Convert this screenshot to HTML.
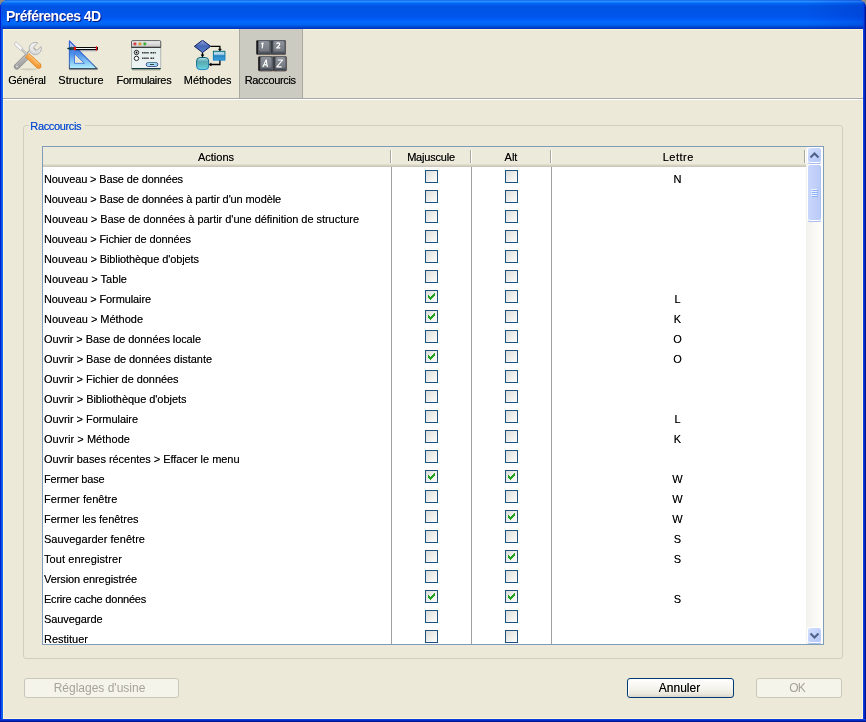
<!DOCTYPE html>
<html><head><meta charset="utf-8"><title>Préférences 4D</title>
<style>
html,body{margin:0;padding:0}
body{width:866px;height:722px;overflow:hidden;position:relative;background:#8e8b82;font-family:"Liberation Sans",sans-serif;font-size:11px;color:#000}
div,i,span{position:absolute;box-sizing:border-box;white-space:pre}
#win{will-change:transform;left:0;top:0;width:866px;height:722px;border-radius:8px 8px 0 0;overflow:hidden;background:#0831d9}
#tb{left:0;top:0;width:866px;height:29px;background:linear-gradient(to bottom,#0058ee 0%,#3593ff 4%,#288eff 6%,#127dff 8%,#036ffc 10%,#0262ee 14%,#0057e5 20%,#0054e3 24%,#0055eb 56%,#005bf5 66%,#026afe 76%,#0062ef 86%,#0050dc 91%,#0040cc 95%,#0030b8 100%)}
#tbl{left:0;top:0;width:3px;height:29px;background:linear-gradient(to right,#001dd0 0,#001dd0 1px,rgba(10,84,232,.7) 1px,rgba(10,84,232,0) 3px)}
#tbr{left:862px;top:0;width:4px;height:29px;background:linear-gradient(to left,#00148c 0,#00148c 1px,#0428c4 1px,#0428c4 2px,rgba(10,60,224,.8) 2px,rgba(10,60,224,0) 4px)}
#title{left:6px;top:8px;font-size:14px;font-weight:bold;color:#fff;text-shadow:1px 1px #0a1883;line-height:16px;letter-spacing:-0.52px}
#bl{left:0;top:29px;width:3px;height:693px;background:linear-gradient(to right,#001dd0 0,#001dd0 1px,#0a54e8 1px,#0a54e8 2px,#1264ee 2px)}
#br{left:863px;top:29px;width:3px;height:693px;background:linear-gradient(to right,#0a3ce0 0,#0a3ce0 1px,#0428c4 1px,#0428c4 2px,#00148c 2px)}
#bb{left:0;top:719px;width:866px;height:3px;background:linear-gradient(to bottom,#0a3ce0 0,#0a3ce0 1px,#0428c4 1px,#0428c4 2px,#00148c 2px)}
#body{left:3px;top:29px;width:860px;height:690px;background:#ece9d8;border:1px solid #fcf5d6}
/* toolbar */
#tsel{left:239px;top:29px;width:64px;height:69px;background:#cccbc2;border-left:1px solid #a9a9a3;border-right:1px solid #a9a9a3}
#tline{left:3px;top:98px;width:860px;height:2px;background:linear-gradient(to bottom,#a7a7a7 0,#a7a7a7 1px,#fff 1px)}
.tl{top:72px;height:16px;line-height:16px;text-align:center;transform:translateX(-50%)}
.ic{width:32px;height:32px;top:40px}
/* group */
#grp{left:23px;top:125px;width:820px;height:534px;border:1px solid #d0d0bf;border-radius:3px}
#gl{left:29px;top:119px;height:14px;line-height:14px;padding:0 3.8px 0 1.3px;background:#ece9d8;color:#0046d5;letter-spacing:-0.36px;text-shadow:0 0 0 rgba(0,70,213,.5)}
/* list */
#lb{left:42px;top:146px;width:782px;height:499px;border:1px solid #7f9db9;background:#fff;overflow:hidden}
#hd{left:43px;top:147px;width:763px;height:20px;background:linear-gradient(to bottom,#ebeadb 0,#ebeadb 17px,#e2decd 17px,#e2decd 18px,#d6d2c2 18px,#d6d2c2 19px,#cbc7b8 19px)}
.hs{top:150px;width:2px;height:13px;background:linear-gradient(to right,#aca899 0,#aca899 1px,#fff 1px)}
.ht{top:149px;height:16px;line-height:16px;transform:translateX(-50%)}
.vl{top:167px;width:1px;height:477px;background:#a0a0a0}
.rt,.tl,.ht,.lt,#cancel{text-shadow:0 0 0 rgba(0,0,0,.55)}
.rt{left:44px;height:20px;line-height:20px;margin-top:2px}
.lt{left:551px;width:253px;height:20px;line-height:20px;text-align:center;margin-top:2px}
.cb{width:13px;height:13px;border:1px solid #1c5180;background:linear-gradient(135deg,#dcdcd7 0%,#fff 100%)}
.cb.ck:after{content:"";position:absolute;left:2px;top:2px;width:7px;height:7px;background:
 linear-gradient(#21a121,#21a121) 0 2px/1px 3px no-repeat,
 linear-gradient(#21a121,#21a121) 1px 3px/1px 3px no-repeat,
 linear-gradient(#21a121,#21a121) 2px 4px/1px 3px no-repeat,
 linear-gradient(#21a121,#21a121) 3px 3px/1px 3px no-repeat,
 linear-gradient(#21a121,#21a121) 4px 2px/1px 3px no-repeat,
 linear-gradient(#21a121,#21a121) 5px 1px/1px 3px no-repeat,
 linear-gradient(#21a121,#21a121) 6px 0px/1px 3px no-repeat}
/* scrollbar */
#sb{left:806px;top:147px;width:17px;height:497px;background:linear-gradient(to right,#f3f1ec 0,#f8f7f3 40%,#fefefb 100%)}
.sbtn{left:807px;width:15px;height:17px;border:1px solid #fff;border-bottom-color:#a9bdee;border-radius:3px;background:linear-gradient(135deg,#d6e1fd 0,#c3d3fd 45%,#b3c6f6 100%);box-shadow:inset 0 -1px 0 0 #fff}
#thumb{left:807px;top:164px;width:15px;height:58px;border:1px solid #fff;border-radius:3px;border-bottom-color:#a9bdee;background:linear-gradient(to right,#c9d7fc 0,#c1d0fb 50%,#b7caf5 100%);box-shadow:inset 0 -1px 0 0 #fff,inset -1px 0 0 0 #adc1f2}
/* buttons */
.btn{height:20px;border-radius:3px;text-align:center;font-size:12px;line-height:19px}
.dis{border:1px solid #c9c7ba;background:#f5f4ea;color:#a6a498}
#cancel{left:627px;top:678px;width:107px;padding-right:2px;border:1px solid #003c74;background:linear-gradient(to bottom,#fff 0,#f4f3ec 55%,#ebe9de 82%,#d8d3c7 100%);box-shadow:inset 1px 1px 0 0 #fff;color:#000}
</style></head>
<body>
<div id="win">
<div id="tb"></div><div style="left:806px;top:0;width:60px;height:29px;background:linear-gradient(to right,rgba(0,20,170,0),rgba(0,20,170,.22))"></div><div id="tbl"></div><div id="tbr"></div>
<div id="title">Préférences 4D</div>
<div id="bl"></div><div id="br"></div><div id="bb"></div>
<div id="body"></div>
<div id="tsel"></div>
<div id="tline"></div>
<svg class="ic" style="position:absolute;left:12px" viewBox="0 0 32 32">
<defs>
<linearGradient id="wh" x1="0" y1="0" x2="1" y2="1"><stop offset="0" stop-color="#fbfbfb"/><stop offset="1" stop-color="#d4d4d4"/></linearGradient>
<linearGradient id="wr" x1="1" y1="0" x2="0" y2="1"><stop offset="0" stop-color="#e2e2e2"/><stop offset="0.35" stop-color="#b4b4b4"/><stop offset="1" stop-color="#a2a2a2"/></linearGradient>
<linearGradient id="og" x1="1" y1="0" x2="0" y2="1"><stop offset="0" stop-color="#ffc070"/><stop offset="0.5" stop-color="#f8a64a"/><stop offset="1" stop-color="#e88c28"/></linearGradient>
</defs>
<ellipse cx="16.5" cy="29.3" rx="8.5" ry="1.1" fill="#d2cfbc"/>
<path d="M21 10.5 L4.8 26.6" stroke="#8e8e8e" stroke-width="5.8" stroke-linecap="round" fill="none"/>
<path d="M21 10.5 L4.8 26.6" stroke="url(#wr)" stroke-width="4.4" stroke-linecap="round" fill="none"/>
<path d="M20.6 8.6 L4 25.2" stroke="#d4d4d4" stroke-width="0.8" stroke-linecap="round" fill="none" opacity="0.7"/>
<circle cx="5" cy="26.6" r="1.1" fill="#f4f4f4" stroke="#909090" stroke-width="0.5"/>
<path d="M22.5 10.5 L17.6 15.4" stroke="#ececec" stroke-width="4.4" fill="none"/>
<path transform="rotate(48 23.3 8.5)" d="M25.8 2.95 A6.1 6.1 0 1 1 20.8 2.95 L20.8 7.2 A2.5 2.5 0 0 0 25.8 7.2 Z" fill="url(#wh)" stroke="#b0b0b0" stroke-width="0.9"/>
<path d="M2.6 3.2 L4.4 2.2 L10.9 8 L8.6 10.3 L2.4 4.8 Z" fill="#f6f6f6" stroke="#b4b4b4" stroke-width="0.7"/>
<path d="M9.8 9.2 L15.2 14.8" stroke="#a4a4a4" stroke-width="2.2" fill="none"/>
<path d="M9.6 8.8 L15 14.4" stroke="#f0f0f0" stroke-width="0.9" fill="none"/>
<path d="M15 15 L26.6 25.9" stroke="#de8a2a" stroke-width="5.6" fill="none"/>
<circle cx="26.6" cy="25.9" r="2.8" fill="#de8a2a"/>
<path d="M15.3 15.3 L26.6 25.9" stroke="url(#og)" stroke-width="4.4" fill="none"/>
<circle cx="26.6" cy="25.9" r="2.2" fill="#f29a38"/>
<path d="M16.4 14.6 L27.4 24.9" stroke="#ffcf90" stroke-width="1" stroke-linecap="round" fill="none" opacity="0.8"/>
</svg>

<svg class="ic" style="position:absolute;left:66px" viewBox="0 0 32 32">
<defs>
<linearGradient id="tg" x1="0" y1="0" x2="0" y2="1"><stop offset="0" stop-color="#3a6ce0"/><stop offset="0.45" stop-color="#4a8ce8"/><stop offset="1" stop-color="#b4f2ff"/></linearGradient>
<linearGradient id="ts" x1="0" y1="0" x2="0" y2="1"><stop offset="0" stop-color="#2a58d8"/><stop offset="0.8" stop-color="#3a70c8"/><stop offset="1" stop-color="#485868"/></linearGradient>
</defs>
<path d="M3.6 29.7 H31.6" stroke="#c4c1ae" stroke-width="1"/>
<path d="M3.4 0.8 L31 28.6 H3.4 Z M8.5 13.8 V23.3 H18.4 Z" fill="url(#tg)" fill-rule="evenodd"/>
<path d="M3.9 1.8 L10.4 8.4 H3.9 Z" fill="#b8ccf4" opacity="0.9"/>
<path d="M3.4 0.8 L31 28.6 H3.4 Z" fill="none" stroke="url(#ts)" stroke-width="1.1" stroke-linejoin="round"/>
<path d="M8.5 13.8 V23.3 H18.4 Z" fill="none" stroke="#3a74dc" stroke-width="0.9"/>
<path d="M3 28.8 H31.8" stroke="#3c4c64" stroke-width="0.9"/>
<path d="M9 10.8 H31" stroke="#203c90" stroke-width="1" opacity="0.35"/>
<path d="M1 8.5 L5.6 6.9 V10.1 Z" fill="#003838" stroke="#003838" stroke-width="0.4"/>
<path d="M5.6 6.9 H8 V10.1 H5.6 Z" fill="#3c4444"/>
<rect x="9.8" y="7" width="20.4" height="3.1" fill="#080808"/>
<rect x="9.8" y="8" width="20.4" height="1" fill="#f4f4f4"/>
<rect x="8" y="6.8" width="2" height="3.5" fill="#ec0c0c"/>
<rect x="29.8" y="6.3" width="1.3" height="4.4" fill="#ec0c0c"/>
<rect x="31.1" y="7" width="0.9" height="3.1" fill="#080808"/>
</svg>

<svg class="ic" style="position:absolute;left:130px" viewBox="0 0 32 32">
<defs>
<linearGradient id="ft" x1="0" y1="0" x2="0" y2="1"><stop offset="0" stop-color="#f0f0f0"/><stop offset="1" stop-color="#c4c4c4"/></linearGradient>
<linearGradient id="fb" x1="0" y1="0" x2="0" y2="1"><stop offset="0" stop-color="#dfe8e8"/><stop offset="1" stop-color="#eef4f4"/></linearGradient>
<linearGradient id="bt" x1="0" y1="0" x2="0" y2="1"><stop offset="0" stop-color="#e0f4f8"/><stop offset="0.5" stop-color="#8cd4ec"/><stop offset="1" stop-color="#c0ecf8"/></linearGradient>
</defs>
<rect x="2" y="28.6" width="28.4" height="2.2" rx="1" fill="#c8c5b2"/>
<rect x="1.5" y="0.6" width="29.2" height="28.2" rx="1.2" fill="url(#fb)" stroke="#9aa4a4" stroke-width="0.7"/>
<path d="M1.5 28.6 H30.7" stroke="#0c3c3c" stroke-width="1.4"/>
<path d="M1.5 7.4 V1.8 Q1.5 0.6 2.7 0.6 H29.5 Q30.7 0.6 30.7 1.8 V7.4 Z" fill="url(#ft)" stroke="#484848" stroke-width="0.8"/>
<path d="M1.5 7.3 H30.7" stroke="#303030" stroke-width="1"/>
<circle cx="4.9" cy="3.8" r="1.6" fill="#e0383e" stroke="#c8a0a0" stroke-width="0.4"/><circle cx="9.9" cy="3.8" r="1.6" fill="#e09c24" stroke="#c8b898" stroke-width="0.4"/><circle cx="14.8" cy="3.8" r="1.6" fill="#34b02c" stroke="#a0c0a0" stroke-width="0.4"/>
<circle cx="6.5" cy="12.5" r="2.2" fill="#fff" stroke="#282828" stroke-width="1"/><circle cx="6.5" cy="12.5" r="0.9" fill="#000"/>
<circle cx="6.5" cy="18.4" r="2.2" fill="#fff" stroke="#282828" stroke-width="1"/>
<path d="M12 12.8 H19 M20.4 12.8 H25.8" stroke="#383838" stroke-width="1.5" stroke-dasharray="1.6 0.5"/>
<path d="M12 18.3 H19 M20.4 18.3 H24.6" stroke="#383838" stroke-width="1.5" stroke-dasharray="1.6 0.5"/>
<rect x="16.2" y="22.5" width="11.6" height="4" rx="2" fill="url(#bt)" stroke="#383088" stroke-width="0.8"/>
<path d="M17.6 22.6 H26.4" stroke="#4a9a9a" stroke-width="0.7"/>
<path d="M20 24.5 H24" stroke="#384848" stroke-width="1.1"/>
</svg>

<svg class="ic" style="position:absolute;left:194px" viewBox="0 0 32 32">
<defs>
<linearGradient id="dg" x1="0" y1="0" x2="0" y2="1"><stop offset="0" stop-color="#90a8e0"/><stop offset="0.5" stop-color="#4464b4"/><stop offset="1" stop-color="#5888d8"/></linearGradient>
<linearGradient id="rg" x1="0" y1="0" x2="0" y2="1"><stop offset="0" stop-color="#98c8e0"/><stop offset="0.3" stop-color="#c0e0f0"/><stop offset="0.5" stop-color="#2484c4"/><stop offset="1" stop-color="#48a4d4"/></linearGradient>
<linearGradient id="qg" x1="0" y1="0" x2="0" y2="1"><stop offset="0" stop-color="#b8e4ec"/><stop offset="0.35" stop-color="#58a8b0"/><stop offset="1" stop-color="#68d4dc"/></linearGradient>
<linearGradient id="qs" x1="0" y1="0" x2="0" y2="1"><stop offset="0" stop-color="#0c5c68"/><stop offset="1" stop-color="#2484c8"/></linearGradient>
<linearGradient id="rs" x1="0" y1="0" x2="0" y2="1"><stop offset="0" stop-color="#0c6c78"/><stop offset="1" stop-color="#1084d8"/></linearGradient>
</defs>
<path d="M16.8 6.3 H25.9 V11 M25.9 20 V24.5 H15.4 M8.5 12.6 V17" stroke="#000" stroke-width="1.3" fill="none"/>
<path d="M24.4 9 H27.4 L25.9 10.6 Z M7 14.8 H10 L8.5 16.6 Z M17.2 23 V26 L15.2 24.5 Z" fill="#000" stroke="#000" stroke-width="0.5"/>
<path d="M0.4 6.3 L8.5 0.2 L16.7 6.3 L8.5 12.5 Z" fill="url(#dg)" stroke="#101c5c" stroke-width="1"/>
<rect x="19.4" y="11.3" width="11.5" height="8.8" fill="url(#rg)" stroke="url(#rs)" stroke-width="1"/>
<rect x="2.6" y="17.5" width="12.1" height="12.1" rx="3.5" fill="url(#qg)" stroke="url(#qs)" stroke-width="1"/>
</svg>

<svg class="ic" style="position:absolute;left:256px" viewBox="0 0 32 32">
<defs><linearGradient id="kf" x1="0" y1="0" x2="0" y2="1"><stop offset="0" stop-color="#8e929a"/><stop offset="1" stop-color="#747880"/></linearGradient></defs>
<rect x="0.3" y="0.1" width="29.7" height="14.7" rx="1.6" fill="#33363c" stroke="#d8b490" stroke-width="0.6"/><rect x="2.2" y="16.2" width="28.7" height="15" rx="1.6" fill="#33363c" stroke="#d8b490" stroke-width="0.6"/>
<rect x="0.30" y="0.10" width="14.60" height="14.70" rx="1.6" fill="#585c64"/><rect x="0.50" y="0.60" width="1.5" height="13.70" rx="0.7" fill="#1a1a1c"/><rect x="2.90" y="0.90" width="10.40" height="10.70" rx="1.8" fill="url(#kf)"/><path d="M2.30 13.70 Q7.60 12.20 14.10 13.70" stroke="#42464e" stroke-width="1.1" fill="none"/><rect x="14.90" y="0.10" width="15.10" height="14.70" rx="1.6" fill="#585c64"/><rect x="15.10" y="0.60" width="1.5" height="13.70" rx="0.7" fill="#34373d"/><rect x="17.50" y="0.90" width="10.90" height="10.70" rx="1.8" fill="url(#kf)"/><path d="M16.90 13.70 Q22.45 12.20 29.20 13.70" stroke="#42464e" stroke-width="1.1" fill="none"/><rect x="2.20" y="16.20" width="14.90" height="15.00" rx="1.6" fill="#585c64"/><rect x="2.40" y="16.70" width="1.5" height="14.00" rx="0.7" fill="#1a1a1c"/><rect x="4.80" y="17.00" width="10.70" height="11.00" rx="1.8" fill="url(#kf)"/><path d="M4.20 30.10 Q9.65 28.60 16.30 30.10" stroke="#42464e" stroke-width="1.1" fill="none"/><rect x="17.10" y="16.20" width="13.80" height="15.00" rx="1.6" fill="#585c64"/><rect x="17.30" y="16.70" width="1.5" height="14.00" rx="0.7" fill="#34373d"/><rect x="19.70" y="17.00" width="9.60" height="11.00" rx="1.8" fill="url(#kf)"/><path d="M19.10 30.10 Q24.00 28.60 30.10 30.10" stroke="#42464e" stroke-width="1.1" fill="none"/>
<g fill="none" stroke="#fff" stroke-width="1.15" stroke-linejoin="round" stroke-linecap="butt">
<path d="M5.3 3.9 L7 2.9 L6.1 8.3"/>
<path d="M20.6 4 Q21.3 2.7 22.7 2.9 Q24.2 3.3 23.5 4.9 Q22.8 6 20.6 7.9 H24.2"/>
<path d="M6.8 27 L10.2 19.8 L11.4 27 M7.9 24.9 H11"/>
<path d="M21.8 20 H26.6 L20.8 26.8 H25.6"/>
</g>
</svg>

<div class="tl" style="left:27px;letter-spacing:-0.2px">Général</div>
<div class="tl" style="left:81px;letter-spacing:0.1px">Structure</div>
<div class="tl" style="left:144px;letter-spacing:-0.3px">Formulaires</div>
<div class="tl" style="left:207.6px;letter-spacing:-0.1px">Méthodes</div>
<div class="tl" style="left:270.2px;letter-spacing:-0.35px">Raccourcis</div>

<div id="grp"></div>
<div id="gl">Raccourcis</div>
<div id="lb"></div>
<div id="hd"></div>
<div class="hs" style="left:390px"></div>
<div class="hs" style="left:470px"></div>
<div class="hs" style="left:550px"></div>
<div class="hs" style="left:804px"></div>
<div class="ht" style="left:216px">Actions</div>
<div class="ht" style="left:431px;letter-spacing:-0.2px">Majuscule</div>
<div class="ht" style="left:511px">Alt</div>
<div class="ht" style="left:678.3px;letter-spacing:0.5px">Lettre</div>
<div class="vl" style="left:391px"></div>
<div class="vl" style="left:471px"></div>
<div class="vl" style="left:551px"></div>
<div class="rt" style="top:167px;letter-spacing:-0.128px">Nouveau > Base de données</div>
<i class="cb" style="left:425px;top:170px"></i>
<i class="cb" style="left:505px;top:170px"></i>
<div class="lt" style="top:167px">N</div>
<div class="rt" style="top:187px;letter-spacing:-0.112px">Nouveau > Base de données à partir d'un modèle</div>
<i class="cb" style="left:425px;top:190px"></i>
<i class="cb" style="left:505px;top:190px"></i>
<div class="rt" style="top:207px;letter-spacing:-0.037px">Nouveau > Base de données à partir d'une définition de structure</div>
<i class="cb" style="left:425px;top:210px"></i>
<i class="cb" style="left:505px;top:210px"></i>
<div class="rt" style="top:227px;letter-spacing:-0.112px">Nouveau > Fichier de données</div>
<i class="cb" style="left:425px;top:230px"></i>
<i class="cb" style="left:505px;top:230px"></i>
<div class="rt" style="top:247px;letter-spacing:-0.089px">Nouveau > Bibliothèque d'objets</div>
<i class="cb" style="left:425px;top:250px"></i>
<i class="cb" style="left:505px;top:250px"></i>
<div class="rt" style="top:267px;letter-spacing:0.022px">Nouveau > Table</div>
<i class="cb" style="left:425px;top:270px"></i>
<i class="cb" style="left:505px;top:270px"></i>
<div class="rt" style="top:287px;letter-spacing:-0.107px">Nouveau > Formulaire</div>
<i class="cb ck" style="left:425px;top:290px"></i>
<i class="cb" style="left:505px;top:290px"></i>
<div class="lt" style="top:287px">L</div>
<div class="rt" style="top:307px;letter-spacing:-0.023px">Nouveau > Méthode</div>
<i class="cb ck" style="left:425px;top:310px"></i>
<i class="cb" style="left:505px;top:310px"></i>
<div class="lt" style="top:307px">K</div>
<div class="rt" style="top:327px;letter-spacing:-0.094px">Ouvrir > Base de données locale</div>
<i class="cb" style="left:425px;top:330px"></i>
<i class="cb" style="left:505px;top:330px"></i>
<div class="lt" style="top:327px">O</div>
<div class="rt" style="top:347px;letter-spacing:-0.052px">Ouvrir > Base de données distante</div>
<i class="cb ck" style="left:425px;top:350px"></i>
<i class="cb" style="left:505px;top:350px"></i>
<div class="lt" style="top:347px">O</div>
<div class="rt" style="top:367px;letter-spacing:-0.057px">Ouvrir > Fichier de données</div>
<i class="cb" style="left:425px;top:370px"></i>
<i class="cb" style="left:505px;top:370px"></i>
<div class="rt" style="top:387px;letter-spacing:-0.039px">Ouvrir > Bibliothèque d'objets</div>
<i class="cb" style="left:425px;top:390px"></i>
<i class="cb" style="left:505px;top:390px"></i>
<div class="rt" style="top:407px;letter-spacing:-0.055px">Ouvrir > Formulaire</div>
<i class="cb" style="left:425px;top:410px"></i>
<i class="cb" style="left:505px;top:410px"></i>
<div class="lt" style="top:407px">L</div>
<div class="rt" style="top:427px;letter-spacing:0.044px">Ouvrir > Méthode</div>
<i class="cb" style="left:425px;top:430px"></i>
<i class="cb" style="left:505px;top:430px"></i>
<div class="lt" style="top:427px">K</div>
<div class="rt" style="top:447px;letter-spacing:-0.038px">Ouvrir bases récentes > Effacer le menu</div>
<i class="cb" style="left:425px;top:450px"></i>
<i class="cb" style="left:505px;top:450px"></i>
<div class="rt" style="top:467px;letter-spacing:-0.169px">Fermer base</div>
<i class="cb ck" style="left:425px;top:470px"></i>
<i class="cb ck" style="left:505px;top:470px"></i>
<div class="lt" style="top:467px">W</div>
<div class="rt" style="top:487px;letter-spacing:0.054px">Fermer fenêtre</div>
<i class="cb" style="left:425px;top:490px"></i>
<i class="cb" style="left:505px;top:490px"></i>
<div class="lt" style="top:487px">W</div>
<div class="rt" style="top:507px;letter-spacing:-0.046px">Fermer les fenêtres</div>
<i class="cb" style="left:425px;top:510px"></i>
<i class="cb ck" style="left:505px;top:510px"></i>
<div class="lt" style="top:507px">W</div>
<div class="rt" style="top:527px;letter-spacing:0.037px">Sauvegarder fenêtre</div>
<i class="cb" style="left:425px;top:530px"></i>
<i class="cb" style="left:505px;top:530px"></i>
<div class="lt" style="top:527px">S</div>
<div class="rt" style="top:547px;letter-spacing:0.098px">Tout enregistrer</div>
<i class="cb" style="left:425px;top:550px"></i>
<i class="cb ck" style="left:505px;top:550px"></i>
<div class="lt" style="top:547px">S</div>
<div class="rt" style="top:567px;letter-spacing:-0.094px">Version enregistrée</div>
<i class="cb" style="left:425px;top:570px"></i>
<i class="cb" style="left:505px;top:570px"></i>
<div class="rt" style="top:587px;letter-spacing:-0.220px">Ecrire cache données</div>
<i class="cb ck" style="left:425px;top:590px"></i>
<i class="cb ck" style="left:505px;top:590px"></i>
<div class="lt" style="top:587px">S</div>
<div class="rt" style="top:607px;letter-spacing:-0.083px">Sauvegarde</div>
<i class="cb" style="left:425px;top:610px"></i>
<i class="cb" style="left:505px;top:610px"></i>
<div class="rt" style="top:627px;letter-spacing:-0.003px">Restituer</div>
<i class="cb" style="left:425px;top:630px"></i>
<i class="cb" style="left:505px;top:630px"></i>
<div id="sb"></div>
<div class="sbtn" style="top:147px"><svg width="13" height="15" viewBox="0 0 13 15" style="position:absolute;left:0;top:0"><path d="M2.5 9.5 L6.5 5.5 L10.5 9.5" fill="none" stroke="#4d6185" stroke-width="2"/></svg></div>
<div id="thumb"><svg width="13" height="56" viewBox="0 0 13 56" style="position:absolute;left:0;top:0"><path d="M3 24.5h6M3 26.5h6M3 28.5h6M3 30.5h6" stroke="#eef4fe" stroke-width="1"/><path d="M4 25.5h6M4 27.5h6M4 29.5h6M4 31.5h6" stroke="#8cb0f8" stroke-width="1"/></svg></div>
<div class="sbtn" style="top:627px"><svg width="13" height="15" viewBox="0 0 13 15" style="position:absolute;left:0;top:0"><path d="M2.5 5.5 L6.5 9.5 L10.5 5.5" fill="none" stroke="#4d6185" stroke-width="2"/></svg></div>

<div class="btn dis" style="left:24px;top:678px;width:155px;padding-right:4px">Réglages d'usine</div>
<div class="btn" id="cancel">Annuler</div>
<div class="btn dis" style="left:756px;top:678px;width:86px;letter-spacing:-1px;padding-right:4px">OK</div>
</div>
</body></html>
